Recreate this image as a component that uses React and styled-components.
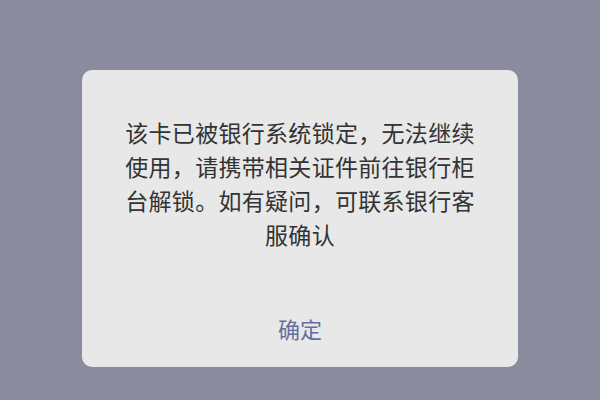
import React from 'react'
import styled, { createGlobalStyle } from 'styled-components'

const Global = createGlobalStyle`
  html, body {
    margin: 0;
    padding: 0;
  }
  body {
    background: #8a8b9d;
    font-family: "Noto Sans CJK SC", "Noto Sans", sans-serif;
  }
`

const Screen = styled.div`
  width: 600px;
  height: 400px;
  display: flex;
  justify-content: center;
  padding-top: 70px;
  box-sizing: border-box;
  background: #8a8b9d;
`

const Dialog = styled.div`
  width: 436px;
  height: 297px;
  box-sizing: border-box;
  background: #e8e8e8;
  border-radius: 10px;
  padding: 45px 40px 13px;
  display: flex;
  flex-direction: column;
`

const Message = styled.p`
  margin: 0;
  width: 356px;
  align-self: center;
  text-align: center;
  font-size: 23px;
  letter-spacing: 0.3px;
  line-height: 34px;
  color: #333333;
`

const Action = styled.button`
  margin-top: auto;
  height: 52px;
  border: none;
  background: none;
  font-family: inherit;
  font-size: 22px;
  color: #676d9e;
  cursor: pointer;
`

export default function App() {
  return (
    <>
      <Global />
      <Screen>
        <Dialog>
          <Message>
            该卡已被银行系统锁定，无法继续使用，请携带相关证件前往银行柜台解锁。如有疑问，可联系银行客服确认
          </Message>
          <Action>确定</Action>
        </Dialog>
      </Screen>
    </>
  )
}
